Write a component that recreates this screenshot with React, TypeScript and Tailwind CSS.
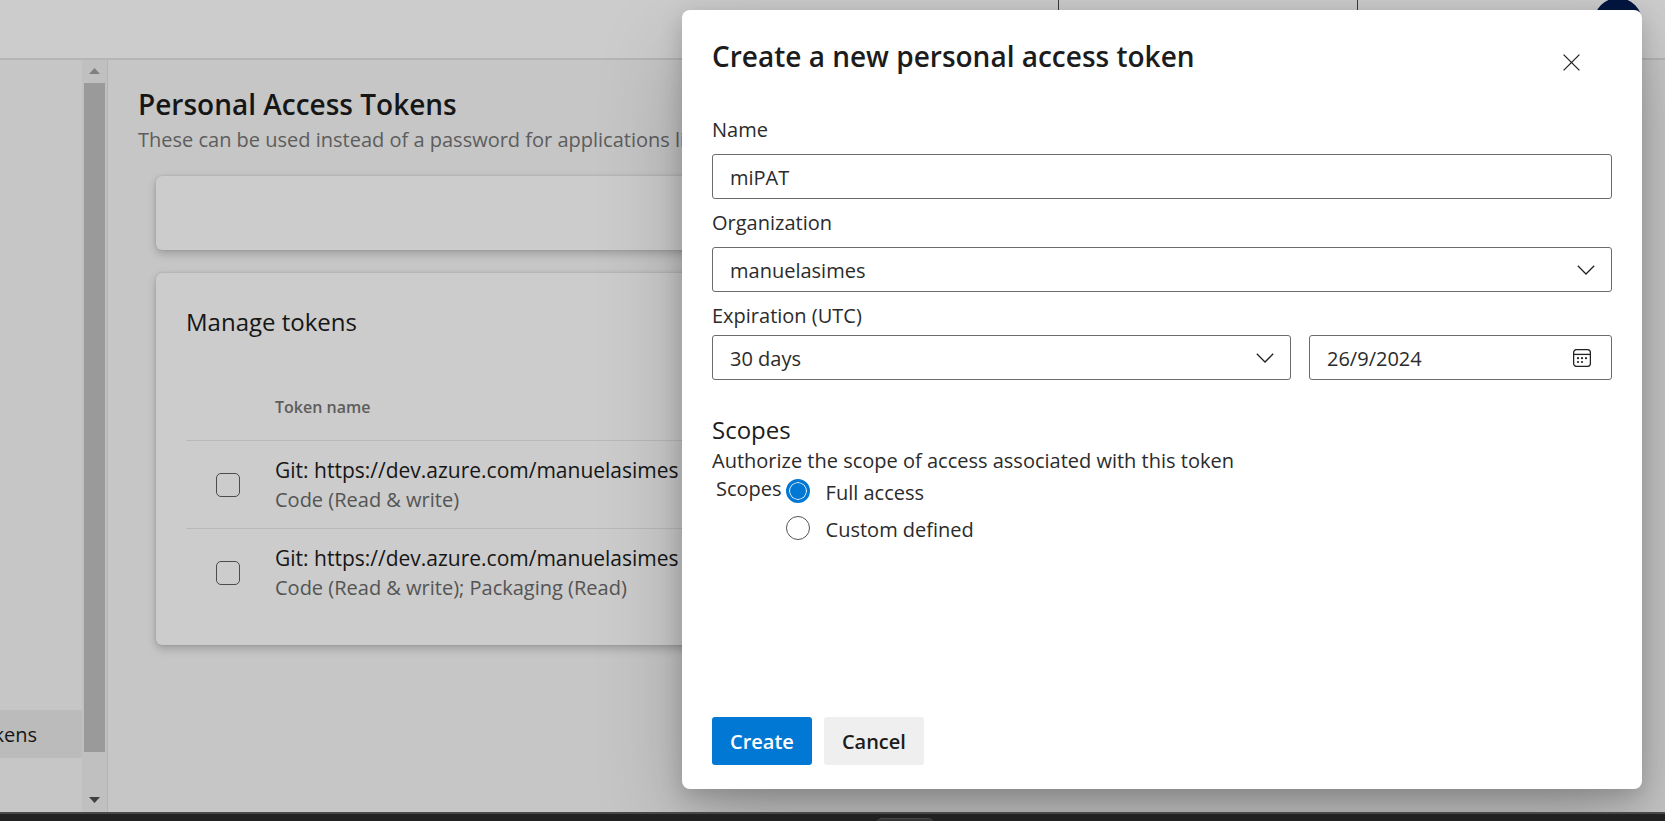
import { useState } from "react";
import type { ReactNode } from "react";

const organizations = ["manuelasimes"];
const durations = ["30 days", "60 days", "90 days"];

const tokens = [
  { id: "git-1", name: "Git: https://dev.azure.com/manuelasimes", scopes: "Code (Read & write)" },
  { id: "git-2", name: "Git: https://dev.azure.com/manuelasimes", scopes: "Code (Read & write); Packaging (Read)" },
];

function Chevron() {
  return (
    <svg viewBox="0 0 18 10" className="pointer-events-none col-start-1 row-start-1 mr-[17px] h-[10px] w-[18px] self-center justify-self-end" fill="none" stroke="#222" strokeWidth="1.3">
      <path d="M0.8 0.8 9 9 17.2 0.8" />
    </svg>
  );
}

function CalendarIcon() {
  return (
    <svg viewBox="0 0 18 18" className="h-[18px] w-[18px]" fill="none" stroke="#222" strokeWidth="1.3">
      <rect x="0.6" y="0.6" width="16.8" height="16.8" rx="3" />
      <path d="M0.6 5.4h16.8" />
      <g fill="#222" stroke="none">
        <circle cx="5" cy="9.2" r="1.1" />
        <circle cx="9" cy="9.2" r="1.1" />
        <circle cx="13" cy="9.2" r="1.1" />
        <circle cx="5" cy="13" r="1.1" />
        <circle cx="9" cy="13" r="1.1" />
      </g>
    </svg>
  );
}

function Picker({ id, options }: { id: string; options: string[] }) {
  return (
    <div className="grid min-w-0 flex-1">
      <select
        id={id}
        className="col-start-1 row-start-1 h-[45px] w-full appearance-none rounded-[3px] border border-[#6b6b6b] bg-white pl-[17px] pr-12 pt-[2px] text-[20px]"
      >
        {options.map((option) => (
          <option key={option}>{option}</option>
        ))}
      </select>
      <Chevron />
    </div>
  );
}

function Field({ id, label, children }: { id: string; label: string; children: ReactNode }) {
  return (
    <div className="flex flex-col">
      <label htmlFor={id} className="mb-[10px] leading-7">
        {label}
      </label>
      {children}
    </div>
  );
}

function Scrollbar() {
  return (
    <div className="flex w-[25px] shrink-0 flex-col items-center bg-[#f1f1f1]">
      <svg viewBox="0 0 11 6" className="mb-[9px] mt-2 h-[6px] w-[11px]" fill="#a0a0a0">
        <path d="M5.5 0 11 6H0z" />
      </svg>
      <div className="w-[21px] grow-[669] basis-0 bg-[#c1c1c1]" />
      <div className="grow-[45] basis-0" />
      <svg viewBox="0 0 11 6" className="mb-[9px] h-[6px] w-[11px]" fill="#505050">
        <path d="M0 0h11L5.5 6z" />
      </svg>
    </div>
  );
}

function TokensPage() {
  return (
    <div className="flex h-full flex-col bg-[#f8f8f8]">
      <header className="flex h-[60px] shrink-0 items-start justify-end border-b-2 border-[#e3e3e3] bg-white">
        <div className="h-8 w-[300px] border-x border-[#4a4a4a]" />
        <div className="-mt-[2px] ml-[236px] mr-[23px] h-12 w-12 rounded-full bg-[#001c52]" />
      </header>
      <div className="flex min-h-0 flex-1">
        <aside className="flex w-[82px] shrink-0 flex-col justify-end overflow-hidden pb-[54px]">
          <a href="#tokens" className="flex h-12 items-center justify-end whitespace-nowrap bg-[#eaeaea] pr-[45px] pt-[2px]">
            Personal access tokens
          </a>
        </aside>
        <Scrollbar />
        <main className="min-w-0 flex-1 overflow-hidden whitespace-nowrap border-l border-[#e0e0e0] pl-[30px] pr-12 pt-[26px]">
          <h1 className="text-[28px] font-semibold leading-9">Personal Access Tokens</h1>
          <p className="leading-9 text-[#757575]">These can be used instead of a password for applications like Git</p>
          <section className="ml-[18px] mt-[18px] h-[74px] rounded-md bg-white shadow-[0_4px_10px_rgba(0,0,0,0.2),0_0_3px_rgba(0,0,0,0.14)]" />
          <section className="ml-[18px] mt-[23px] h-[372px] rounded-md bg-white pl-[30px] shadow-[0_4px_10px_rgba(0,0,0,0.2),0_0_3px_rgba(0,0,0,0.14)]">
            <h2 className="pt-[31px] text-[24px] leading-9">Manage tokens</h2>
            <table className="mt-[35px] w-full border-collapse text-left">
              <thead>
                <tr className="h-[65px] border-b border-[#e8e8e8] text-[16px] text-[#757575]">
                  <td className="w-[89px]" />
                  <th className="font-semibold">Token name</th>
                </tr>
              </thead>
              <tbody>
                {tokens.map((token) => (
                  <tr key={token.id} className="h-[88px] border-b border-[#e8e8e8] last:border-b-0">
                    <td className="pl-[30px] pt-[2px]">
                      <input
                        type="checkbox"
                        id={token.id}
                        className="block h-6 w-6 appearance-none rounded-[5px] border border-[#606060]"
                      />
                    </td>
                    <td className="pt-[2px] leading-[29px]">
                      <label htmlFor={token.id} className="block text-[21px]">
                        {token.name}
                      </label>
                      <span className="block text-[#6a6a6a]">{token.scopes}</span>
                    </td>
                  </tr>
                ))}
              </tbody>
            </table>
          </section>
        </main>
      </div>
    </div>
  );
}

function ScopeOption({ label, checked, onSelect }: { label: string; checked: boolean; onSelect: () => void }) {
  return (
    <label className="flex h-6 items-center gap-4">
      <input
        type="radio"
        name="scope"
        checked={checked}
        onChange={onSelect}
        className="h-6 w-6 shrink-0 appearance-none rounded-full border border-[#555] checked:border-[3px] checked:border-[#0078d4] checked:bg-[#0078d4] checked:shadow-[inset_0_0_0_1px_#fff]"
      />
      <span className="pt-[3px]">{label}</span>
    </label>
  );
}

function CreateTokenDialog() {
  const [scope, setScope] = useState("Full access");

  return (
    <form
      role="dialog"
      aria-labelledby="dialog-title"
      className="flex w-[960px] max-w-full flex-col rounded-lg bg-white px-[30px] pb-6 text-[#2b2b2b] shadow-[0_38px_86px_rgba(0,0,0,0.22),0_7px_22px_rgba(0,0,0,0.18)]"
    >
      <div className="flex items-start justify-between pr-8 pt-7">
        <h2 id="dialog-title" className="text-[28px] font-semibold leading-9 text-[#1c1c1c]">
          Create a new personal access token
        </h2>
        <button type="button" aria-label="Close" className="mt-4">
          <svg viewBox="0 0 17 17" className="block h-[17px] w-[17px]" fill="none" stroke="#222" strokeWidth="1.3">
            <path d="M0.6 0.6 16.4 16.4M16.4 0.6 0.6 16.4" />
          </svg>
        </button>
      </div>

      <div className="mt-[42px] flex flex-col gap-[10px]">
        <Field id="token-name" label="Name">
          <input id="token-name" defaultValue="miPAT" className="h-[45px] rounded-[3px] border border-[#6b6b6b] bg-white px-[17px] pt-[2px]" />
        </Field>
        <Field id="organization" label="Organization">
          <div className="flex">
            <Picker id="organization" options={organizations} />
          </div>
        </Field>
        <div className="flex flex-col">
          <label htmlFor="duration" className="mb-[5px] leading-7">
            Expiration (UTC)
          </label>
          <div className="flex gap-[18px]">
            <Picker id="duration" options={durations} />
            <div className="flex h-[45px] w-[303px] items-center rounded-[3px] border border-[#6b6b6b] pl-[17px] pr-5">
              <input aria-label="Expiration date" defaultValue="26/9/2024" className="w-full min-w-0 bg-transparent pt-[2px]" />
              <button type="button" aria-label="Pick a date">
                <CalendarIcon />
              </button>
            </div>
          </div>
        </div>
      </div>

      <h3 className="mt-[34px] text-[24px] leading-8 text-[#1c1c1c]">Scopes</h3>
      <p className="leading-[30px]">Authorize the scope of access associated with this token</p>
      <fieldset className="flex gap-1 pl-1">
        <div className="leading-[26px]">Scopes</div>
        <div className="flex flex-col gap-[13px] pt-[3px]">
          {["Full access", "Custom defined"].map((option) => (
            <ScopeOption key={option} label={option} checked={scope === option} onSelect={() => setScope(option)} />
          ))}
        </div>
      </fieldset>

      <div className="mt-auto flex gap-3">
        <button type="submit" className="h-12 rounded-[3px] bg-[#0078d4] px-[18px] pt-[2px] font-semibold text-white">
          Create
        </button>
        <button type="button" className="h-12 rounded-[3px] bg-[#efefef] px-[18px] pt-[2px] font-semibold text-[#1c1c1c]">
          Cancel
        </button>
      </div>
    </form>
  );
}

export default function App() {
  return (
    <div className="flex h-screen flex-col overflow-hidden font-['Open_Sans',sans-serif] text-[20px] text-[#1c1c1c]">
      <div className="relative min-h-0 flex-1 overflow-hidden">
        <TokensPage />
        <div className="absolute inset-0 flex justify-end bg-black/20 pb-[23px] pr-[23px] pt-[10px]">
          <CreateTokenDialog />
        </div>
      </div>
      <footer className="flex h-[9px] shrink-0 flex-col overflow-hidden border-t-2 border-[#484848] bg-[#212121] pt-1">
        <div className="ml-[876px] h-6 w-[58px] shrink-0 rounded-md border border-[#484848] bg-[#333]" />
      </footer>
    </div>
  );
}
